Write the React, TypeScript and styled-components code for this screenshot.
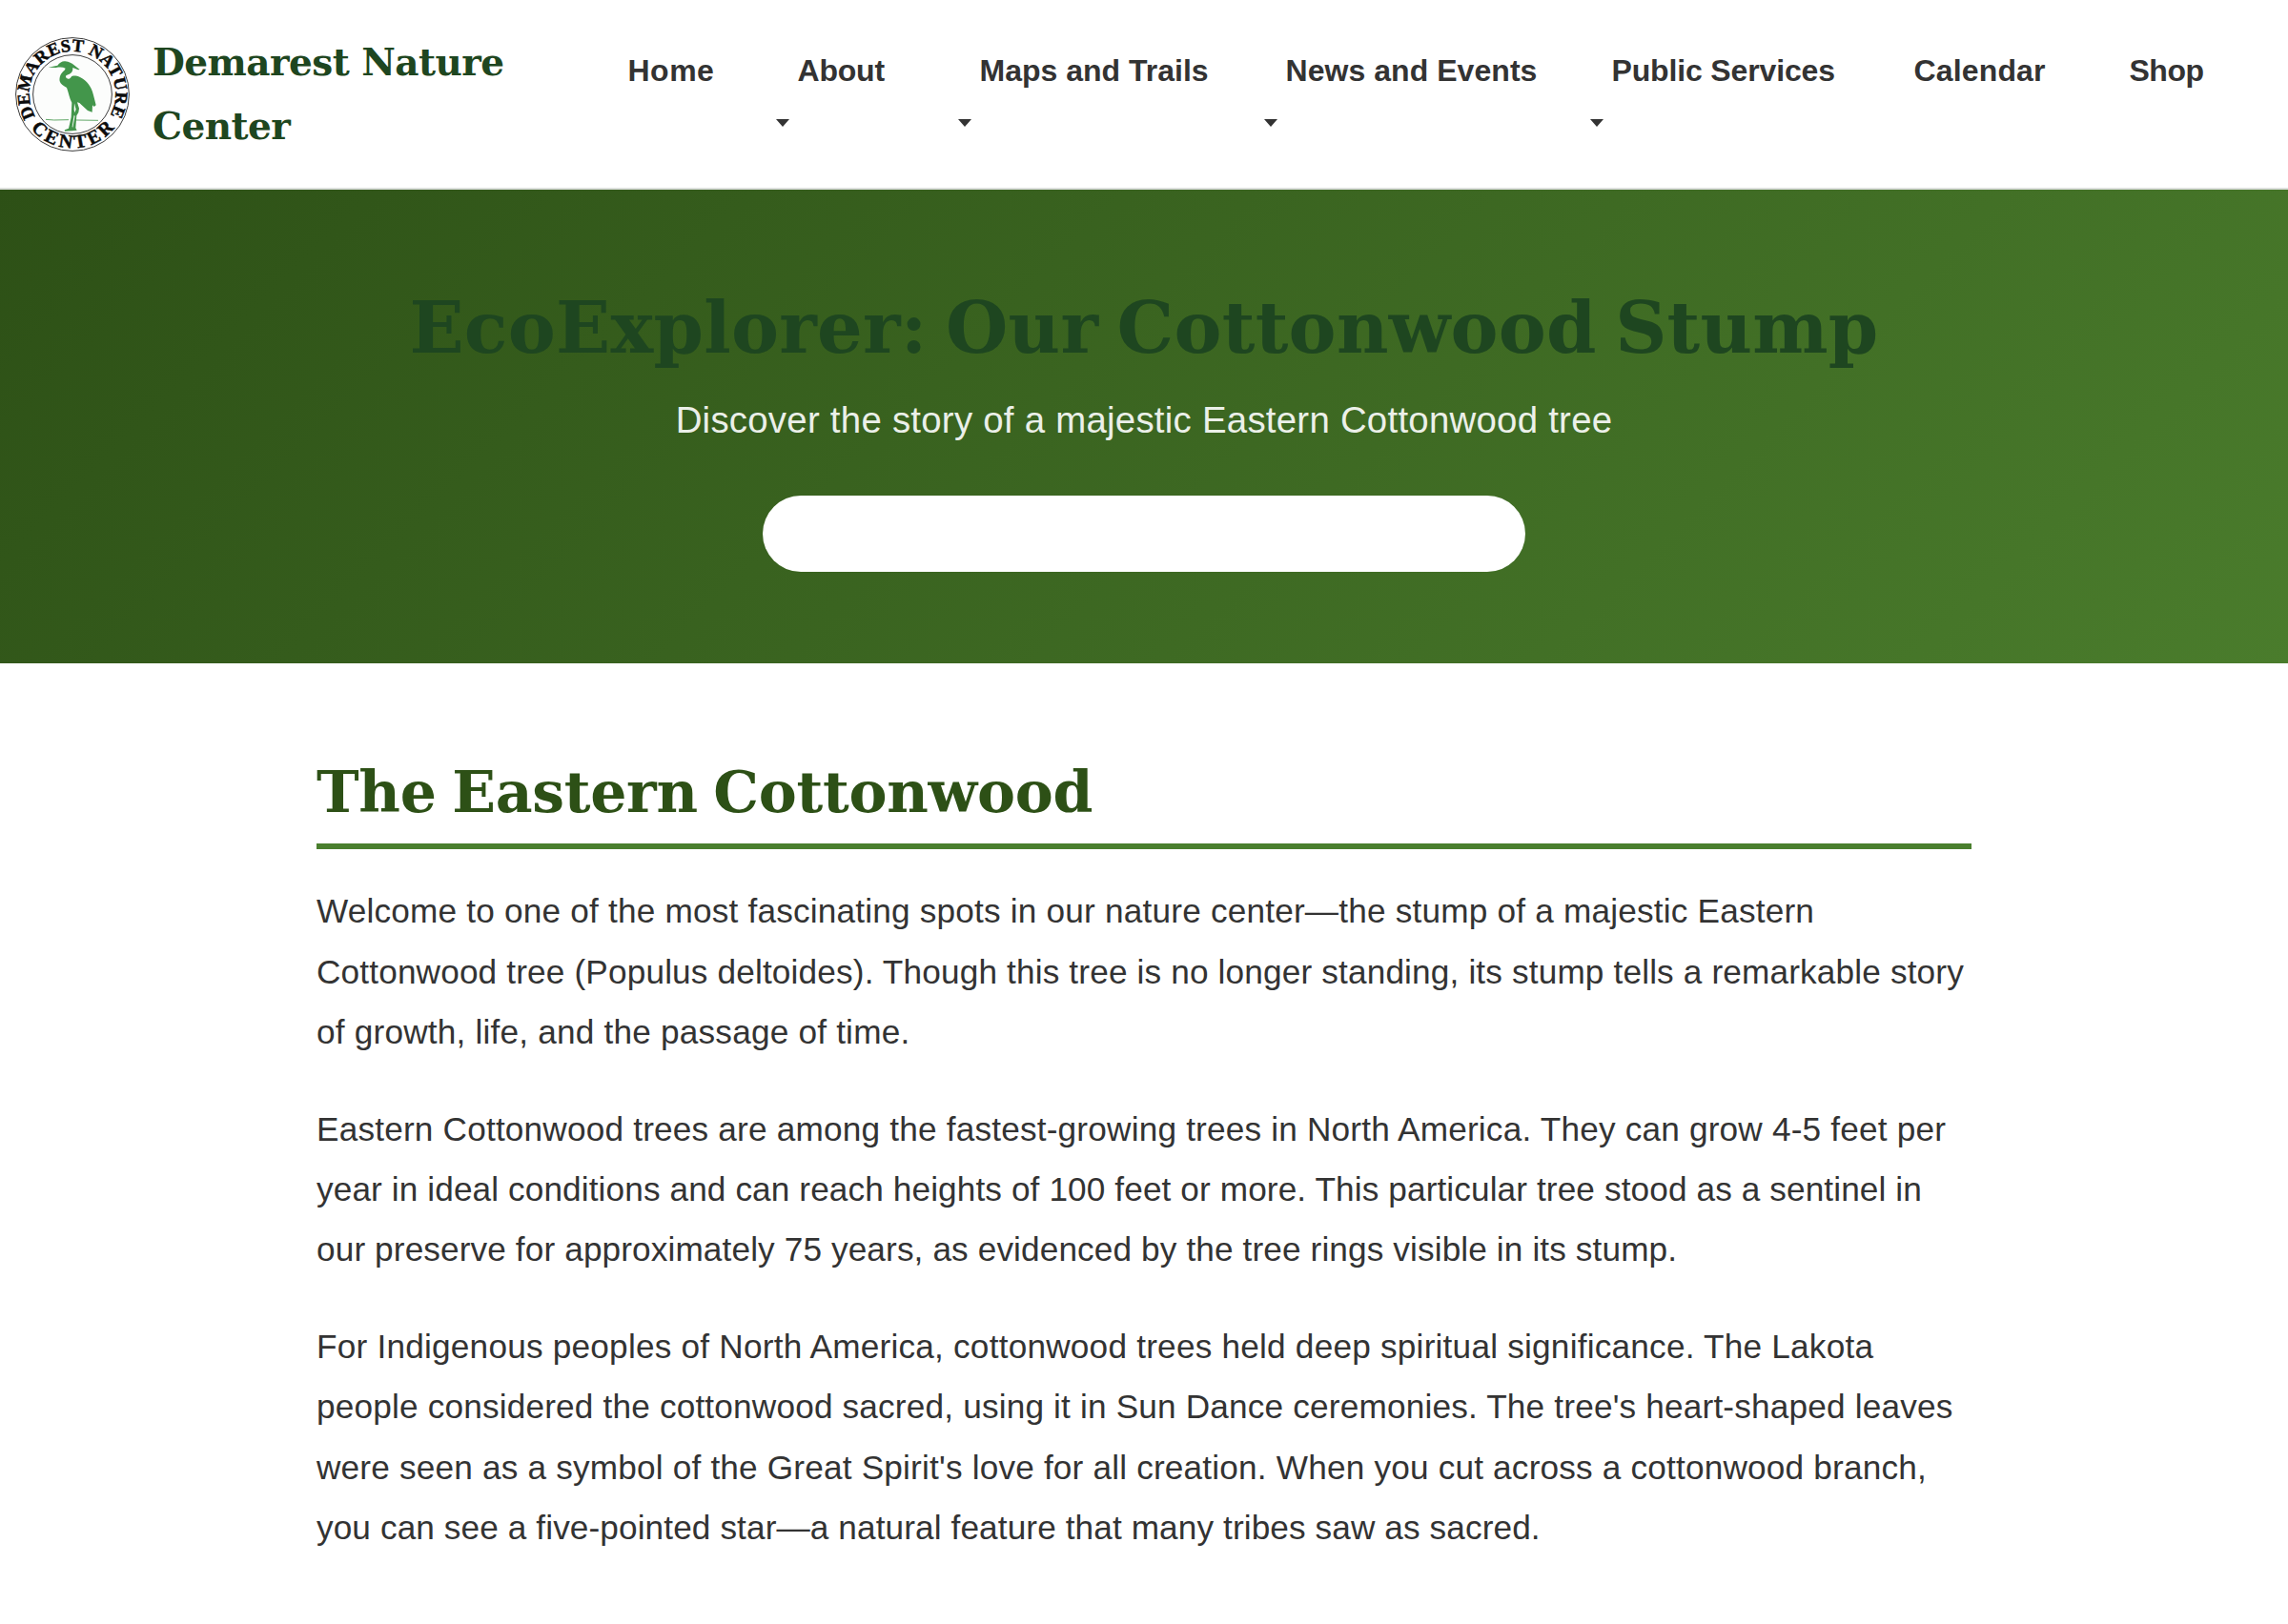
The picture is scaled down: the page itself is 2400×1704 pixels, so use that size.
import React from 'react';
import styled, { createGlobalStyle } from 'styled-components';

const SERIF = '"DejaVu Serif", Georgia, serif';
const SANS = '"Liberation Sans", Arial, sans-serif';

const GlobalStyle = createGlobalStyle`
  *, *::before, *::after { box-sizing: border-box; }
  html, body { margin: 0; padding: 0; background: #fff; }
  body { font-family: ${SANS}; color: #333; overflow: hidden; }
`;

const Page = styled.div`
  width: 2400px;
  height: 1704px;
  overflow: hidden;
  background: #fff;
`;

const Header = styled.header`
  display: flex;
  align-items: flex-start;
  height: 199px;
  padding: 32px 16px 0;
  background: #fff;
  border-bottom: 2px solid #dcdfdc;
`;

const Brand = styled.a`
  display: flex;
  align-items: center;
  gap: 24px;
  width: 620px;
  height: 134px;
  color: #1e4620;
  text-decoration: none;
`;

const Logo = styled.svg`
  flex: none;
  width: 120px;
  height: 120px;
  overflow: visible;
`;

const BrandName = styled.span`
  width: 400px;
  font: bold 39px/66.56px ${SERIF};
  letter-spacing: -0.55px;
`;

const Nav = styled.nav`
  flex: none;
`;

const NavList = styled.ul`
  display: grid;
  grid-template-columns: 178px 191px 321px 342px 317px 226px 124px;
  margin: 0;
  padding: 15px 0 0;
  list-style: none;
`;

const NavItem = styled.li`
  display: flex;
  flex-direction: column;
  align-items: flex-start;
`;

const NavLink = styled.a<{ $tracking: number }>`
  padding: 0 22.5px;
  font: bold 32px/54px ${SANS};
  letter-spacing: ${(p) => p.$tracking}px;
  color: #333;
  text-decoration: none;
  white-space: nowrap;
`;

const Caret = styled.span`
  margin-top: 24px;
  border-top: 8px solid #333;
  border-left: 7px solid transparent;
  border-right: 7px solid transparent;
`;

const Hero = styled.section`
  display: flex;
  flex-direction: column;
  align-items: center;
  height: 497px;
  padding-top: 97px;
  background: linear-gradient(135deg, #2d5016 0%, #4a7c2c 100%);
`;

const HeroTitle = styled.h1`
  margin: 0 0 18px;
  font: bold 75px/96px ${SERIF};
  letter-spacing: 0.26px;
  word-spacing: -7px;
  color: #1e4620;
`;

const HeroSubtitle = styled.p`
  margin: 0 0 49px;
  font-size: 38.4px;
  line-height: 61px;
  letter-spacing: 0.25px;
  color: #fff;
  opacity: 0.9;
`;

const HeroPill = styled.div`
  width: 800px;
  height: 80px;
  border-radius: 40px;
  background: #fff;
`;

const Main = styled.main`
  padding: 97px 332px 0;
`;

const SectionTitle = styled.h2`
  margin: 0 0 33.2px;
  padding-bottom: 15px;
  border-bottom: 6px solid #4a7f2e;
  font: bold 60px/77px ${SERIF};
  letter-spacing: -0.28px;
  word-spacing: -4px;
  color: #2d5016;
`;

const Paragraph = styled.p`
  margin: 0 0 38.4px;
  font-size: 35.2px;
  line-height: 63.36px;
`;

const Line = styled.span<{ $tracking: number }>`
  display: block;
  letter-spacing: ${(p) => p.$tracking}px;
  white-space: nowrap;
`;

type NavEntry = { label: string; tracking: number; menu?: boolean };

const navEntries: NavEntry[] = [
  { label: 'Home', tracking: 0.5 },
  { label: 'About', tracking: -0.2, menu: true },
  { label: 'Maps and Trails', tracking: 0, menu: true },
  { label: 'News and Events', tracking: 0.05, menu: true },
  { label: 'Public Services', tracking: -0.15, menu: true },
  { label: 'Calendar', tracking: 0.15 },
  { label: 'Shop', tracking: -0.5 },
];

const paragraphs: [string, number][][] = [
  [
    ['Welcome to one of the most fascinating spots in our nature center—the stump of a majestic Eastern', 0.194],
    ['Cottonwood tree (Populus deltoides). Though this tree is no longer standing, its stump tells a remarkable story', 0.155],
    ['of growth, life, and the passage of time.', 0.2],
  ],
  [
    ['Eastern Cottonwood trees are among the fastest-growing trees in North America. They can grow 4-5 feet per', 0.19],
    ['year in ideal conditions and can reach heights of 100 feet or more. This particular tree stood as a sentinel in', 0.11],
    ['our preserve for approximately 75 years, as evidenced by the tree rings visible in its stump.', 0.12],
  ],
  [
    ['For Indigenous peoples of North America, cottonwood trees held deep spiritual significance. The Lakota', 0.217],
    ["people considered the cottonwood sacred, using it in Sun Dance ceremonies. The tree's heart-shaped leaves", 0.175],
    ["were seen as a symbol of the Great Spirit's love for all creation. When you cut across a cottonwood branch,", 0.185],
    ['you can see a five-pointed star—a natural feature that many tribes saw as sacred.', 0.105],
  ],
];

const SealText = styled.text<{ $size: number }>`
  font: bold ${(p) => p.$size}px "Liberation Serif", serif;
  fill: #0c0c0c;
  stroke: #0c0c0c;
  stroke-width: 0.5px;
`;

function HeronSeal() {
  return (
    <Logo viewBox="0 0 120 120" aria-hidden="true">
      <defs>
        <path id="sealTop" d="M21.2 83.2 A45.2 45.2 0 1 1 98.8 83.2" />
        <path id="sealBottom" d="M15.2 94.4 A56.6 56.6 0 0 0 104.8 94.4" />
      </defs>
      <circle cx="60" cy="60" r="59.4" fill="#fff" stroke="#3c3c3c" strokeWidth="1" />
      <circle cx="60" cy="60" r="41.4" fill="#fcfdfc" stroke="#3c3c3c" strokeWidth="1" />
      <SealText $size={18.5}>
        <textPath href="#sealTop" textLength="189" lengthAdjust="spacing">DEMAREST NATURE</textPath>
      </SealText>
      <SealText $size={20}>
        <textPath href="#sealBottom" startOffset="2" textLength="100" lengthAdjust="spacing">CENTER</textPath>
      </SealText>
      <g transform="translate(-16 -18.67) scale(0.33333)">
        <path
          fill="#43964b"
          d="M152 151 L181 145 C188 136 196 131 205 132 C218 134 226 138 232 143 L251 158 L246 159 L229 152
             C230 162 226 169 217 173 C208 175 204 180 209 184 C214 189 219 188 224 181 C229 176 240 177 252 182
             C274 193 288 212 294 238 L302 270 L296 275 L291 270 L290 292 L276 287 L262 274 L250 263 L243 261
             L249 280 L247 293 L241 303 L238 342 L242 349 L226 351 L203 352 L204 348 L216 343 L224 308 L226 262
             C218 248 216 230 210 215 C200 210 190 203 188 195 C186 183 190 170 203 160 L206 154 C198 150 188 150 176 152 Z"
        />
        <path fill="#fcfdfc" d="M234 264 L239 283 L235 294 L233 284 Z M233 302 L236 304 L229 340 L227 338 Z" />
        <path d="M144 315 L170 317 L216 316 M240 317 L309 318" fill="none" stroke="#62a868" strokeWidth="3" />
      </g>
    </Logo>
  );
}

export default function App() {
  return (
    <Page>
      <GlobalStyle />
      <Header>
        <Brand>
          <HeronSeal />
          <BrandName>Demarest Nature Center</BrandName>
        </Brand>
        <Nav>
          <NavList>
            {navEntries.map((entry) => (
              <NavItem key={entry.label}>
                <NavLink $tracking={entry.tracking}>{entry.label}</NavLink>
                {entry.menu && <Caret />}
              </NavItem>
            ))}
          </NavList>
        </Nav>
      </Header>
      <Hero>
        <HeroTitle>EcoExplorer: Our Cottonwood Stump</HeroTitle>
        <HeroSubtitle>Discover the story of a majestic Eastern Cottonwood tree</HeroSubtitle>
        <HeroPill />
      </Hero>
      <Main>
        <SectionTitle>The Eastern Cottonwood</SectionTitle>
        {paragraphs.map((lines, i) => (
          <Paragraph key={i}>
            {lines.map(([text, tracking]) => (
              <Line key={text} $tracking={tracking}>{text}</Line>
            ))}
          </Paragraph>
        ))}
      </Main>
    </Page>
  );
}
